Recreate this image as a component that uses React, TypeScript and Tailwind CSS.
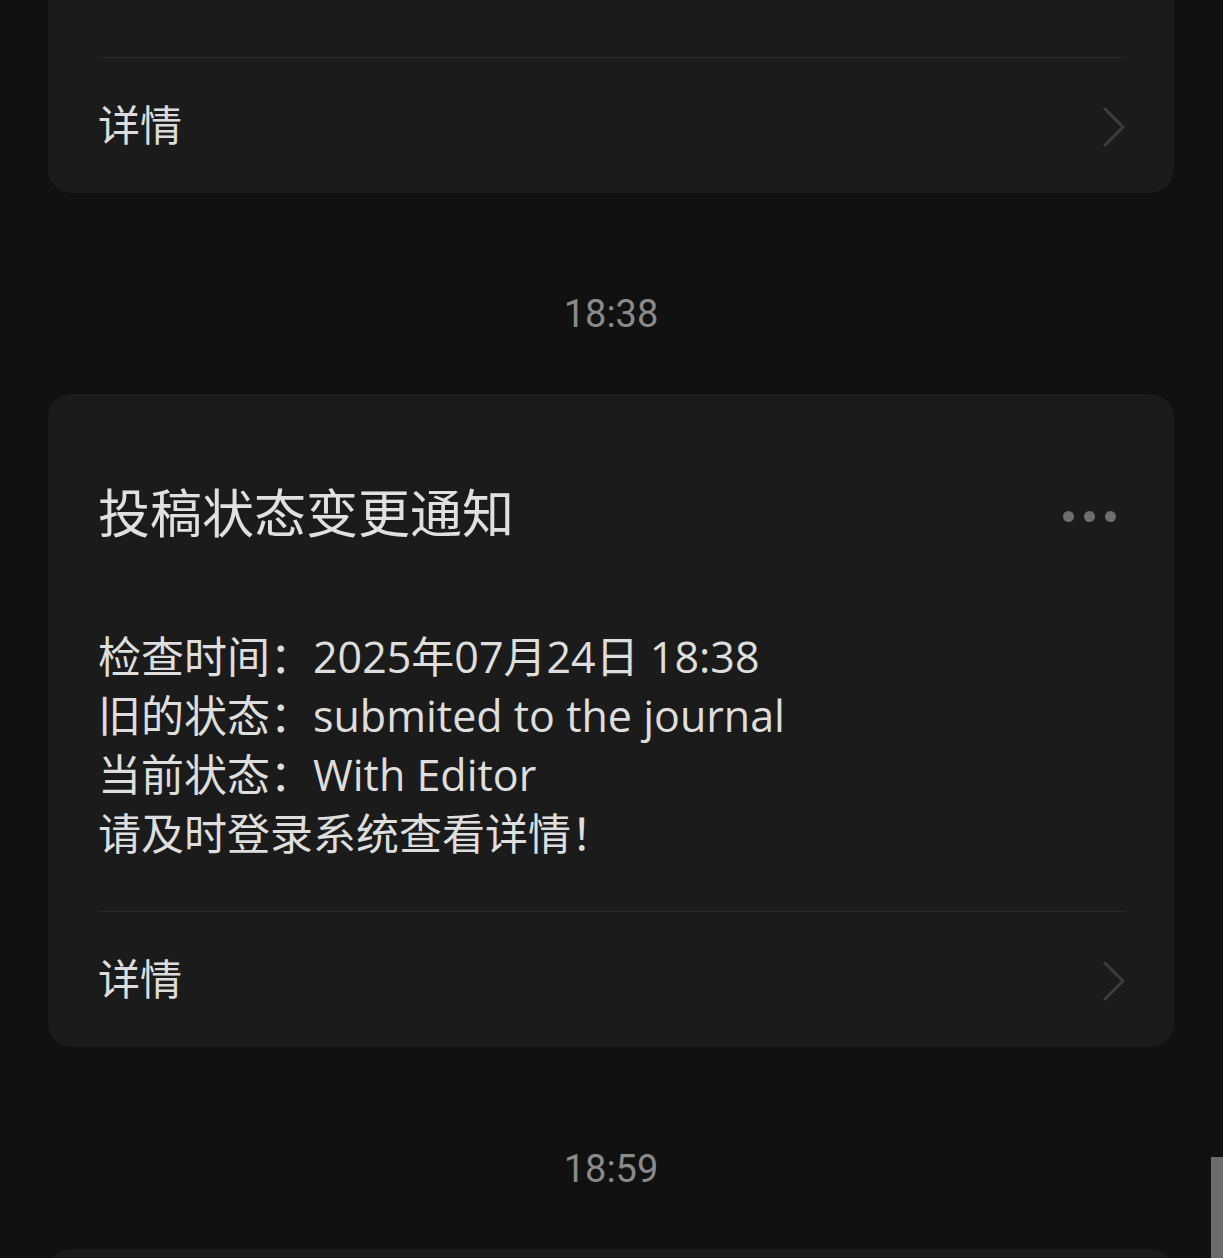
import React from "react";

const font = { fontFamily: '"Roboto", "Noto Sans CJK SC", sans-serif' };
const bodyFont = { fontFamily: '"Open Sans", "Noto Sans CJK SC", sans-serif' };

function Chevron() {
  return (
    <svg width="24" height="40" viewBox="0 0 24 40" fill="none" className="shrink-0">
      <path d="M3 2 L21 20 L3 38" stroke="#3c3c3c" strokeWidth="3" strokeLinecap="round" strokeLinejoin="round" />
    </svg>
  );
}

function DetailRow() {
  return (
    <div className="flex h-[135px] items-center justify-between pt-[3px]">
      <span className="text-[42px] leading-none text-[#dcdcdc]">详情</span>
      <Chevron />
    </div>
  );
}

function Time({ t }: { t: string }) {
  return (
    <div className="flex h-[60px] items-center justify-center text-[38px] leading-none text-[#8a8a8a]">
      {t}
    </div>
  );
}

export default function App() {
  return (
    <div
      className="relative h-[1258px] w-[1223px] overflow-hidden bg-[#111111]"
      style={font}
    >
      <div className="flex flex-col px-[48px] pr-[49px]">
        {/* top card (clipped) */}
        <div className="rounded-b-[24px] bg-[#1b1b1b] px-[50px] pr-[48px] pt-[57px]">
          <div className="h-px bg-[#2a2a2a]" />
          <DetailRow />
        </div>

        <div className="pt-[91px] pb-[50px]">
          <Time t="18:38" />
        </div>

        {/* main card */}
        <div className="rounded-[24px] bg-[#1b1b1b] px-[50px] pr-[48px] pt-[92px]">
          <div className="flex h-[60px] items-center justify-between">
            <span className="text-[52px] leading-none text-[#e0e0e0]">投稿状态变更通知</span>
            <div className="mr-[10px] flex items-center gap-[10px]">
              <span className="block h-[11px] w-[11px] rounded-full bg-[#6e6e6e]" />
              <span className="block h-[11px] w-[11px] rounded-full bg-[#6e6e6e]" />
              <span className="block h-[11px] w-[11px] rounded-full bg-[#6e6e6e]" />
            </div>
          </div>
          <div className="mt-[81px] text-[43px] leading-[59px] text-[#dedede]" style={bodyFont}>
            <div>检查时间：2025年07月24日 18:38</div>
            <div>旧的状态：submited to the journal</div>
            <div>当前状态：With Editor</div>
            <div>请及时登录系统查看详情！</div>
          </div>
          <div className="mt-[48px] h-px bg-[#2a2a2a]" />
          <DetailRow />
        </div>

        <div className="pt-[92px] pb-[50px]">
          <Time t="18:59" />
        </div>

        <div className="h-[40px] rounded-t-[24px] bg-[#1b1b1b]" />
      </div>

      {/* scrollbar */}
      <div className="absolute right-0 top-[1157px] h-[101px] w-[12px] bg-[#6b6b6b]" />
    </div>
  );
}
